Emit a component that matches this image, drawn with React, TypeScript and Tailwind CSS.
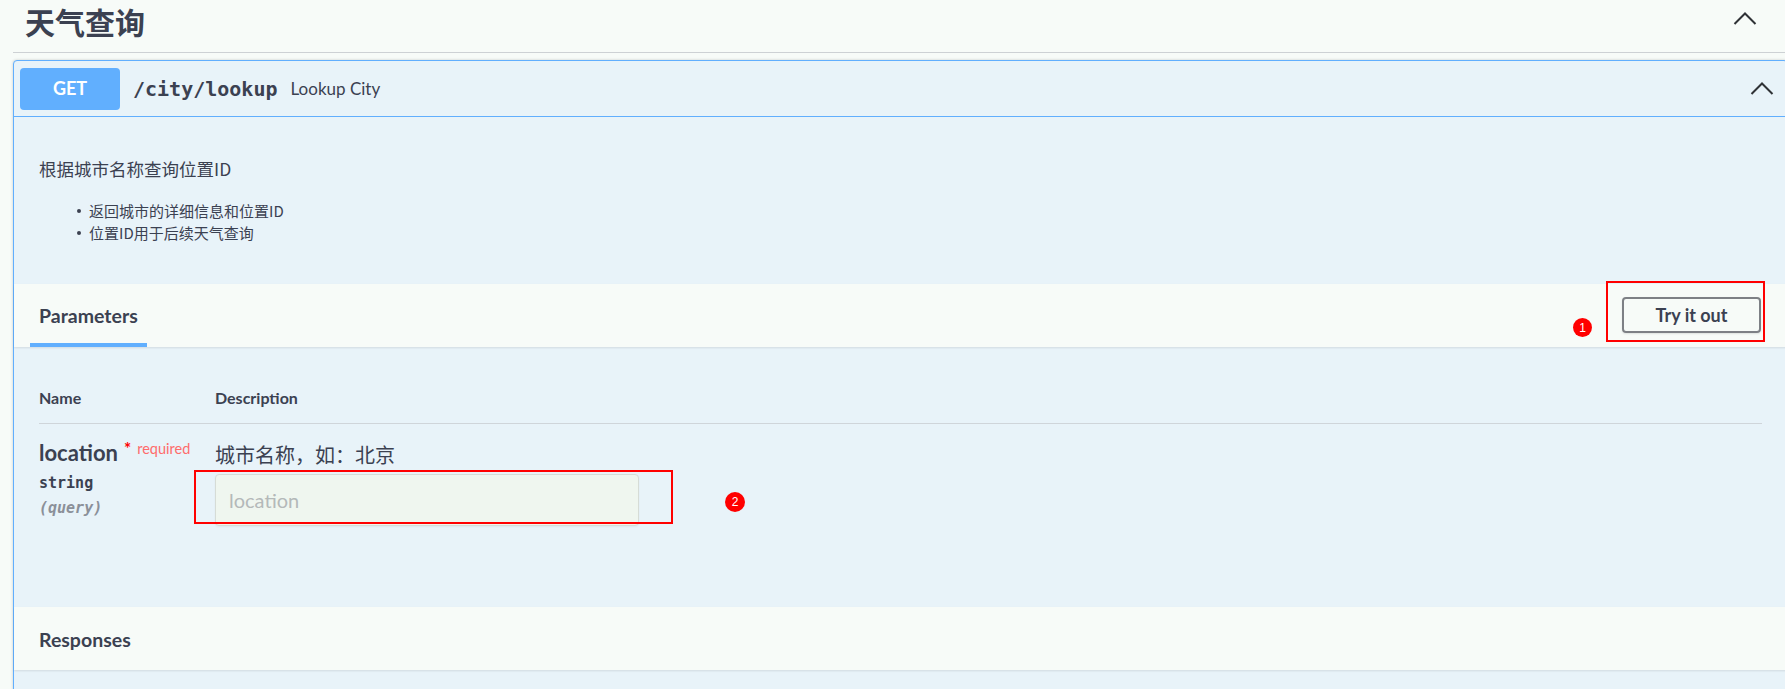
import React from "react";

function ChevronUp() {
  return (
    <svg width="24" height="13" viewBox="0 0 24 13" className="block">
      <path d="M1.5 12 L12 1.5 L22.5 12" fill="none" stroke="#2f3236" strokeWidth="2" />
    </svg>
  );
}

export default function App() {
  return (
    <div className="w-[1785px] h-[689px] overflow-hidden bg-[#f7fbf8] text-[#3b4151] font-['Lato','Noto_Sans_CJK_SC',sans-serif]">
      <div className="w-[1788px] pl-[13px]">
        {/* tag header */}
        <div className="h-[53px] flex items-start justify-between border-b border-[#cdd1d4] pl-[12px] pr-[31px]">
          <h3 className="mt-[3px] text-[30px] leading-[36px] font-bold font-['Noto_Sans_CJK_SC',sans-serif]">天气查询</h3>
          <div className="mt-[12px]">
            <ChevronUp />
          </div>
        </div>

        {/* opblock */}
        <div className="mt-[7px] border border-[#61affe] rounded-[4px] bg-[#e8f3f9] shadow-[0_0_3px_rgba(0,0,0,0.19)]">
          {/* summary */}
          <div className="h-[56px] flex items-center border-b border-[#61affe] pl-[6px] pr-[13px]">
            <span className="w-[100px] h-[42px] rounded-[4px] bg-[#61affe] text-white text-[18px] font-bold flex items-center justify-center">
              GET
            </span>
            <span className="ml-[13px] font-['DejaVu_Sans_Mono',monospace] text-[20px] font-bold">/city/lookup</span>
            <span className="ml-[13px] text-[17px]">Lookup City</span>
            <span className="ml-auto">
              <ChevronUp />
            </span>
          </div>

          {/* description */}
          <div className="h-[167px] pl-[25px] pt-[40px] font-['Noto_Sans_CJK_SC',sans-serif]">
            <p className="text-[17.5px] leading-[24px]">根据城市名称查询位置ID</p>
            <ul className="mt-[19px] text-[15px] leading-[22px]">
              <li className="flex items-center">
                <span className="ml-[38px] mr-[8px] w-[4px] h-[4px] rounded-full bg-[#3b4151]" />
                返回城市的详细信息和位置ID
              </li>
              <li className="flex items-center">
                <span className="ml-[38px] mr-[8px] w-[4px] h-[4px] rounded-full bg-[#3b4151]" />
                位置ID用于后续天气查询
              </li>
            </ul>
          </div>

          {/* parameters header */}
          <div className="h-[63px] bg-[#f7fbf8] shadow-[0_1px_2px_rgba(0,0,0,0.1)] flex justify-between pl-[16px] pr-[26px]">
            <div className="w-[117px] h-full flex flex-col">
              <div className="pl-[9px] pt-[20px] text-[19.5px] font-bold leading-[24px]">Parameters</div>
              <div className="mt-auto h-[4px] bg-[#61affe]" />
            </div>
            <div className="relative self-start mt-[13px]">
              <button className="w-[139px] h-[36px] border-2 border-[#7d8085] rounded-[4px] text-[18px] font-bold text-[#3b4151] shadow-[0_1px_2px_rgba(0,0,0,0.1)]">
                Try it out
              </button>
              <div className="absolute -left-[16px] -top-[16px] -right-[4px] -bottom-[9px] border-2 border-[#ff0000]" />
              <div className="absolute left-[-49px] top-[21px] w-[19px] h-[19px] rounded-full bg-[#ff0000] text-white text-[12px] leading-none flex items-center justify-center font-['Liberation_Sans',sans-serif]">
                1
              </div>
            </div>
          </div>

          {/* parameters body */}
          <div className="h-[260px] px-[25px] pt-[41px]">
            <div className="flex border-b border-[#cfd5da] pb-[15px] text-[16px] font-bold leading-[20px]">
              <div className="w-[176px]">Name</div>
              <div>Description</div>
            </div>
            <div className="flex pt-[17px]">
              <div className="w-[176px]">
                <div className="flex items-start">
                  <span className="text-[22px] font-bold leading-[24px]">location</span>
                  <span className="ml-[6px] text-[17px] leading-[16px] text-[#ff0000] font-bold">*</span>
                  <span className="ml-[6px] -mt-[1px] text-[14.5px] leading-[18px] text-[#ff6b6b]">required</span>
                </div>
                <div className="mt-[8px] font-['DejaVu_Sans_Mono',monospace] text-[15px] font-bold leading-[20px]">string</div>
                <div className="mt-[5px] font-['DejaVu_Sans_Mono',monospace] text-[15px] font-bold italic leading-[20px] text-[#8b9099]">
                  (query)
                </div>
              </div>
              <div>
                <div className="mt-[2px] text-[20px] leading-[24px] font-['Noto_Sans_CJK_SC',sans-serif]">城市名称，如：北京</div>
                <div className="relative mt-[7px] w-[424px] h-[52px]">
                  <input
                    placeholder="location"
                    className="w-full h-full border border-[#d6dcd6] rounded-[4px] bg-[#eff6ef] px-[13px] text-[20px] text-[#3b4151] placeholder:text-[#b4b9b9] outline-none shadow-[0_1px_2px_rgba(0,0,0,0.05)]"
                  />
                  <div className="absolute -left-[21px] -top-[4px] -right-[34px] bottom-[2px] border-2 border-[#ff0000] pointer-events-none" />
                  <div className="absolute left-[510px] top-[18px] w-[20px] h-[20px] rounded-full bg-[#ff0000] text-white text-[12px] leading-none flex items-center justify-center font-['Liberation_Sans',sans-serif]">
                    2
                  </div>
                </div>
              </div>
            </div>
          </div>

          {/* responses */}
          <div className="h-[63px] bg-[#f7fbf8] shadow-[0_1px_2px_rgba(0,0,0,0.1)] flex items-center pl-[25px] pt-[3px]">
            <span className="text-[19.5px] font-bold">Responses</span>
          </div>
          <div className="h-[60px]" />
        </div>
      </div>
    </div>
  );
}
